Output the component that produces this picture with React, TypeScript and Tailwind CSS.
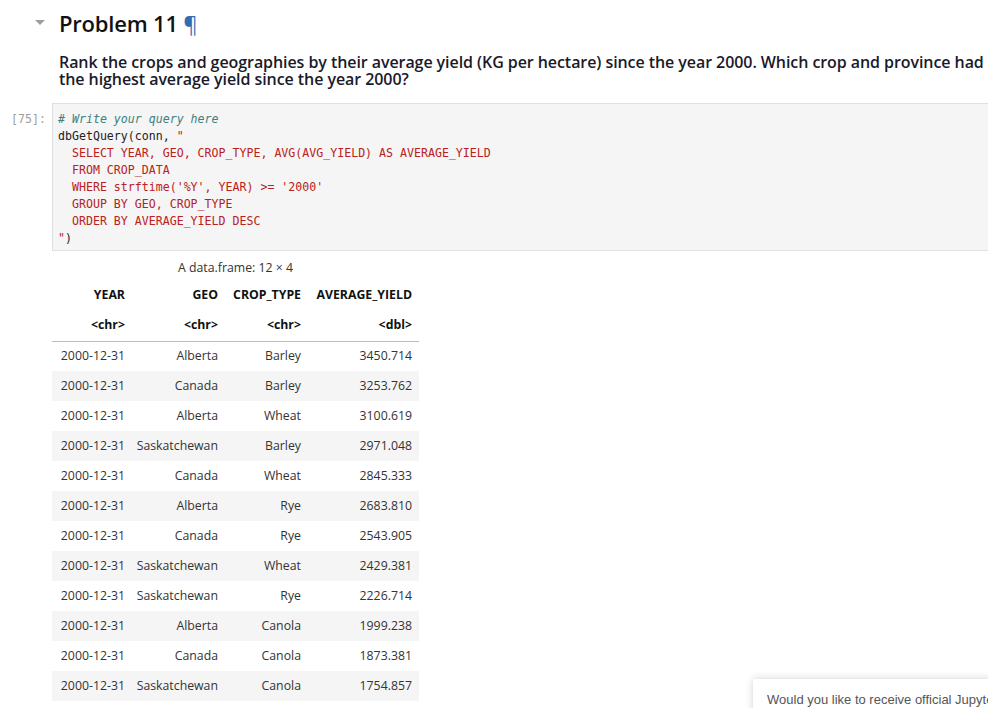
import React from "react";

const rows: [string, string, string, string][] = [
  ["2000-12-31", "Alberta", "Barley", "3450.714"],
  ["2000-12-31", "Canada", "Barley", "3253.762"],
  ["2000-12-31", "Alberta", "Wheat", "3100.619"],
  ["2000-12-31", "Saskatchewan", "Barley", "2971.048"],
  ["2000-12-31", "Canada", "Wheat", "2845.333"],
  ["2000-12-31", "Alberta", "Rye", "2683.810"],
  ["2000-12-31", "Canada", "Rye", "2543.905"],
  ["2000-12-31", "Saskatchewan", "Wheat", "2429.381"],
  ["2000-12-31", "Saskatchewan", "Rye", "2226.714"],
  ["2000-12-31", "Alberta", "Canola", "1999.238"],
  ["2000-12-31", "Canada", "Canola", "1873.381"],
  ["2000-12-31", "Saskatchewan", "Canola", "1754.857"],
];

export default function App() {
  return (
    <div className="relative w-[988px] h-[708px] overflow-hidden bg-white font-['Open_Sans',sans-serif] text-[#222]">
      {/* Heading */}
      <div className="flex items-center h-[44px] pt-[2px]">
        <div className="w-[59px] flex justify-end pr-[13px]">
          <svg width="12" height="8" viewBox="0 0 12 8">
            <polygon points="1,1 11,1 6,6" fill="#9e9e9e" />
          </svg>
        </div>
        <h1 className="text-[22px] font-semibold text-[#111] leading-none tracking-[-0.2px]">
          Problem 11 <span className="text-[#2f6eb5] font-normal">¶</span>
        </h1>
      </div>
      {/* Paragraph */}
      <div className="pl-[59px] pt-[10px] text-[16px] font-semibold leading-[17px] text-[#1a1a2a] tracking-[-0.07px] whitespace-nowrap">
        <div>Rank the crops and geographies by their average yield (KG per hectare) since the year 2000. Which crop and province had</div>
        <div>the highest average yield since the year 2000?</div>
      </div>
      {/* Code cell */}
      <div className="flex mt-[15px]">
        <div className="w-[52px] pt-[8px] pr-[6px] text-right font-['DejaVu_Sans_Mono',monospace] text-[11.6px] leading-[17px] text-[#9e9e9e]">
          [75]:
        </div>
        <div className="flex-1 h-[148px] bg-[#f5f5f5] border border-[#e0e0e0] border-r-0 pl-[5px] pt-[7px] font-['DejaVu_Sans_Mono',monospace] text-[11.6px] leading-[17px] whitespace-pre">
          <div className="italic text-[#408080]"># Write your query here</div>
          <div className="text-[#222]">
            dbGetQuery(conn, <span className="text-[#ba2121]">"</span>
          </div>
          <div className="text-[#ba2121]">{"  SELECT YEAR, GEO, CROP_TYPE, AVG(AVG_YIELD) AS AVERAGE_YIELD"}</div>
          <div className="text-[#ba2121]">{"  FROM CROP_DATA"}</div>
          <div className="text-[#ba2121]">{"  WHERE strftime('%Y', YEAR) >= '2000'"}</div>
          <div className="text-[#ba2121]">{"  GROUP BY GEO, CROP_TYPE"}</div>
          <div className="text-[#ba2121]">{"  ORDER BY AVERAGE_YIELD DESC"}</div>
          <div className="text-[#222]">
            <span className="text-[#ba2121]">"</span>)
          </div>
        </div>
      </div>
      {/* Output table */}
      <div className="pl-[52px] pt-[7px] text-[12.3px] text-[#333]">
        <table className="border-collapse">
          <caption className="h-[22px] leading-[20px] text-[#333]">A data.frame: 12 × 4</caption>
          <thead>
            <tr className="h-[30px] font-bold text-[#111]">
              <th className="w-[80px] text-right pr-[7px]">YEAR</th>
              <th className="w-[93px] text-right pr-[7px]">GEO</th>
              <th className="w-[83px] text-right pr-[7px]">CROP_TYPE</th>
              <th className="w-[111px] text-right pr-[7px]">AVERAGE_YIELD</th>
            </tr>
            <tr className="h-[31px] font-bold text-[#111] border-b border-[#bdbdbd]">
              <th className="text-right pr-[7px]">&lt;chr&gt;</th>
              <th className="text-right pr-[7px]">&lt;chr&gt;</th>
              <th className="text-right pr-[7px]">&lt;chr&gt;</th>
              <th className="text-right pr-[7px]">&lt;dbl&gt;</th>
            </tr>
          </thead>
          <tbody>
            {rows.map((r, i) => (
              <tr key={i} className={i % 2 === 1 ? "h-[30px] bg-[#f5f5f5]" : "h-[30px] bg-white"}>
                {r.map((c, j) => (
                  <td key={j} className="text-right pr-[7px]">
                    {c}
                  </td>
                ))}
              </tr>
            ))}
          </tbody>
        </table>
      </div>
      {/* Popup */}
      <div className="absolute left-[753px] top-[679px] w-[260px] h-[60px] bg-white shadow-[0_0_8px_rgba(0,0,0,0.18)] pl-[14px] pt-[11px] font-['Liberation_Sans',sans-serif] text-[13px] text-[#555] whitespace-nowrap">
        Would you like to receive official Jupyter news?
      </div>
    </div>
  );
}
